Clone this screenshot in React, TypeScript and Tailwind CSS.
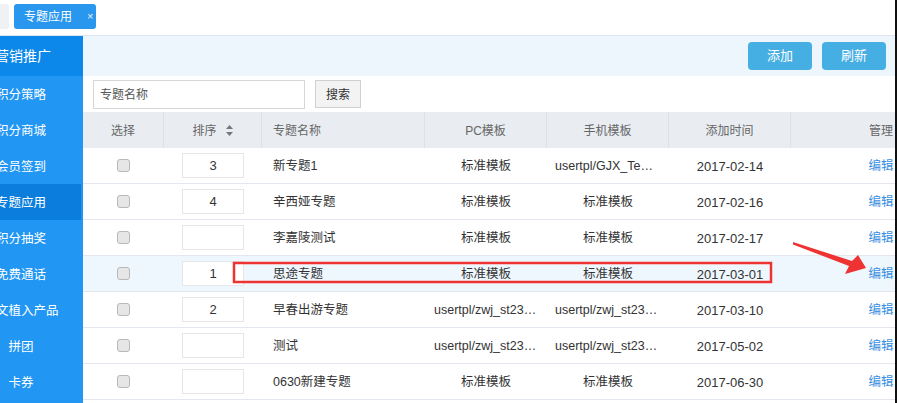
import React from "react"

const rows = [
  { sort: "3", name: "新专题1", pc: "标准模板", mobile: "usertpl/GJX_Template", date: "2017-02-14" },
  { sort: "4", name: "辛西娅专题", pc: "标准模板", mobile: "标准模板", date: "2017-02-16" },
  { sort: "", name: "李嘉陵测试", pc: "标准模板", mobile: "标准模板", date: "2017-02-17" },
  { sort: "1", name: "思途专题", pc: "标准模板", mobile: "标准模板", date: "2017-03-01", hl: true },
  { sort: "2", name: "早春出游专题", pc: "usertpl/zwj_st23_tpl", mobile: "usertpl/zwj_st23_tpl", date: "2017-03-10" },
  { sort: "", name: "测试", pc: "usertpl/zwj_st23_tpl", mobile: "usertpl/zwj_st23_tpl", date: "2017-05-02" },
  { sort: "", name: "0630新建专题", pc: "标准模板", mobile: "标准模板", date: "2017-06-30" },
]

const menu = ["积分策略", "积分商城", "会员签到", "专题应用", "积分抽奖", "免费通话", "软文植入产品", "拼团", "卡券"]

const cols = "grid grid-cols-[81px_98px_163px_122px_122px_122px_180px] w-[888px]"

export default function App() {
  return (
    <div className="flex h-[403px] w-[900px] overflow-hidden bg-white text-[12px] text-[#333] font-['Liberation_Sans','Noto_Sans_CJK_SC',sans-serif]">
      <div className="relative flex w-[895px] flex-col">
        {/* tabs */}
        <div className="flex h-[36px] shrink-0 items-start gap-[5px] border-b border-[#dfe5ec] pt-[4px]">
          <div className="h-[25px] w-[9px] rounded-r-[3px] bg-[#eff1f4]" />
          <div className="flex h-[25px] w-[82px] items-center rounded-[3px] bg-[#2a97ee] pl-[10px] text-white">
            <span>专题应用</span>
            <span className="ml-[15px] text-[11px] text-[#e3f1fd]">×</span>
          </div>
        </div>

        <div className="flex flex-1 overflow-hidden">
          {/* sidebar */}
          <div className="w-[83px] shrink-0 overflow-hidden bg-[#2196f3] text-white">
            <div className="-ml-[39px] flex h-[40px] w-[124px] items-center justify-center bg-[#0c88ea] text-[14px]">
              营销推广
            </div>
            {menu.map((m) => (
              <div
                key={m}
                className={
                  "-ml-[39px] flex h-[36px] w-[120px] items-center justify-center pt-[2px] text-[12.5px] " +
                  (m === "专题应用" ? "bg-[#0a7ddd]" : "")
                }
              >
                {m}
              </div>
            ))}
          </div>

          {/* main */}
          <div className="flex-1 overflow-hidden">
            <div className="flex h-[40px] items-center justify-end gap-[10px] bg-[#eef6fd] pr-[9px]">
              <button className="h-[28px] w-[64px] rounded-[4px] bg-[#45aee3] text-[13px] text-white">添加</button>
              <button className="h-[28px] w-[64px] rounded-[4px] bg-[#45aee3] text-[13px] text-white">刷新</button>
            </div>

            <div className="flex h-[36px] items-center gap-[10px] pl-[10px]">
              <div className="flex h-[29px] w-[212px] items-center border border-[#d6d6d6] pl-[6px] pt-[1px] text-[#555]">
                专题名称
              </div>
              <button className="h-[28px] w-[46px] border border-[#d0d0d0] bg-[#f3f3f3] pt-[1px] text-[#333]">搜索</button>
            </div>

            <div className={cols + " h-[36px] items-center bg-[#e9edf2] text-[#666]"}>
              <div className="flex h-full items-center justify-center border-r border-[#dde2e7] pt-[1px]">选择</div>
              <div className="flex h-full items-center justify-center gap-[9px] border-r border-[#dde2e7] pt-[1px]">
                <span>排序</span>
                <svg width="7" height="11" viewBox="0 0 7 11">
                  <path d="M3.5 0 L7 4 L0 4 Z M0 7 L7 7 L3.5 11 Z" fill="#777" />
                </svg>
              </div>
              <div className="flex h-full items-center border-r border-[#dde2e7] pl-[11px] pt-[1px]">专题名称</div>
              <div className="flex h-full items-center justify-center border-r border-[#dde2e7] pt-[1px]">PC模板</div>
              <div className="flex h-full items-center justify-center border-r border-[#dde2e7] pt-[1px]">手机模板</div>
              <div className="flex h-full items-center justify-center border-r border-[#dde2e7] pt-[1px]">添加时间</div>
              <div className="flex h-full items-center justify-center pt-[1px]">管理</div>
            </div>

            {rows.map((r, i) => (
              <div
                key={i}
                className={cols + " h-[36px] items-center border-b border-[#e3e8ee] " + (r.hl ? "bg-[#eff7fe]" : "bg-white")}
              >
                <div className="flex justify-center">
                  <span className="h-[13px] w-[13px] rounded-[3px] border border-[#b8b8b8] bg-[#e6e6e6]" />
                </div>
                <div className="flex justify-center">
                  <div className="flex h-[25px] w-[62px] items-center justify-center border border-[#e6e6e6] bg-white pt-[1px] text-[13px]">
                    {r.sort}
                  </div>
                </div>
                <div className="pl-[11px] pt-[2px] text-[12.5px]">{r.name}</div>
                <div className="truncate px-[9px] pt-[2px] text-center text-[12.5px]">{r.pc}</div>
                <div className="truncate px-[8px] pt-[2px] text-center text-[12.5px]">{r.mobile}</div>
                <div className="pt-[2px] text-center text-[13px]">{r.date}</div>
                <div className="pt-[2px] text-center text-[12.5px] text-[#3a8fe0]">编辑</div>
              </div>
            ))}
          </div>
        </div>

        {/* annotation */}
        <svg className="pointer-events-none absolute left-0 top-0" width="895" height="403">
          <rect x="234" y="263" width="537" height="19" fill="none" stroke="#ee3333" strokeWidth="2.5" />
          <polygon points="793,242 852,261 858,255 866,268 845,274 849,266 793,244.5" fill="#ef3232" />
        </svg>
      </div>
      <div className="h-full w-[2px] bg-[#111]" />
      <div className="flex-1 bg-white" />
    </div>
  )
}
